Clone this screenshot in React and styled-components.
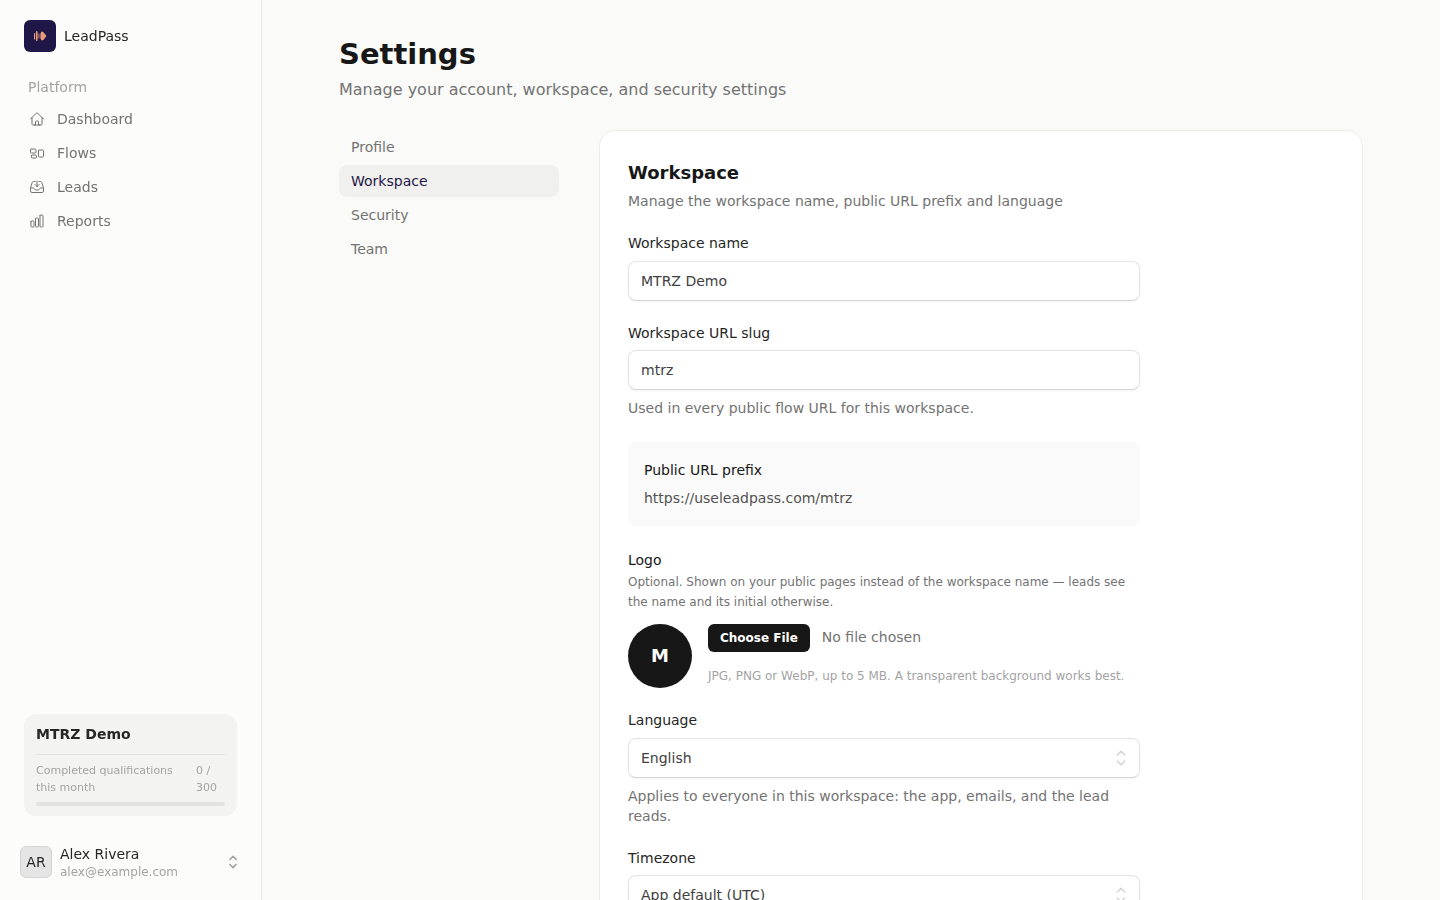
import React from "react";
import styled, { createGlobalStyle } from "styled-components";
import {
  HiOutlineHome,
  HiOutlineRectangleGroup,
  HiOutlineInboxArrowDown,
  HiOutlineChartBar,
} from "react-icons/hi2";

const GlobalStyle = createGlobalStyle`
  *, *::before, *::after { box-sizing: border-box; }
  body {
    margin: 0;
    background: #fafaf8;
    color: #171717;
    font-family: "DejaVu Sans", sans-serif;
    font-size: 14px;
    line-height: 20px;
  }
  h1, h2, p { margin: 0; }
  button, input, select { font: inherit; }
  svg { display: block; flex: none; }
`;

const Shell = styled.div`
  display: grid;
  grid-template-columns: 262px minmax(0, 1fr);
  align-items: start;
`;

const Sidebar = styled.aside`
  position: sticky;
  top: 0;
  display: flex;
  flex-direction: column;
  height: 100vh;
  padding: 20px 16px 16px;
  background: rgba(255, 255, 255, 0.4);
  border-right: 1px solid #e8e8e7;
  will-change: transform;
`;

const Brand = styled.a`
  display: flex;
  align-items: center;
  gap: 8px;
  padding-left: 8px;
  color: #262626;
  text-decoration: none;
`;

const NavHeading = styled.div`
  padding: 25px 12px 6px;
  color: #a3a3a3;
`;

const NavList = styled.nav`
  display: flex;
  flex-direction: column;
  gap: 2px;
`;

const NavItem = styled.a`
  display: flex;
  align-items: center;
  gap: 12px;
  height: 32px;
  padding: 0 13px;
  color: #737373;
  text-decoration: none;
`;

const UsageCard = styled.section`
  margin: auto 8px 24px;
  padding: 10px 12px;
  border-radius: 12px;
  background: rgba(23, 23, 23, 0.04);
`;

const UsageTitle = styled.div`
  padding-bottom: 10px;
  border-bottom: 1px solid #e2e2e1;
  color: #262626;
  font-weight: 700;
`;

const UsageRow = styled.div`
  display: flex;
  justify-content: space-between;
  padding: 7px 0 6px;
  color: #a3a3a3;
  font-size: 11px;
  line-height: 17px;
`;

const UsageLabel = styled.span`
  flex: 1;
`;

const UsageCount = styled.span`
  flex: 0 0 29px;
`;

const UsageTrack = styled.div`
  height: 4px;
  border-radius: 2px;
  background: #e2e2e1;
`;

const Account = styled.button`
  display: flex;
  align-items: center;
  gap: 8px;
  width: 100%;
  height: 44px;
  padding: 0 2px 0 4px;
  border: 0;
  background: transparent;
  color: #a3a3a3;
  text-align: left;
`;

const Initials = styled.span`
  display: grid;
  place-items: center;
  flex: none;
  width: 32px;
  height: 32px;
  border: 1px solid #d4d4d4;
  border-radius: 6px;
  background: #e5e5e5;
  color: #262626;
`;

const AccountText = styled.span`
  display: flex;
  flex: 1;
  flex-direction: column;
  min-width: 0;
  padding-top: 2px;
`;

const AccountName = styled.span`
  color: #262626;
  line-height: 18px;
`;

const AccountEmail = styled.span`
  font-size: 12px;
  line-height: 18px;
`;

const Main = styled.main`
  width: 100%;
  max-width: 1024px;
  margin: 0 auto;
  padding: 36px 0 32px;
`;

const PageTitle = styled.h1`
  font-size: 29px;
  line-height: 36px;
  font-weight: 700;
`;

const PageIntro = styled.p`
  margin-top: 6px;
  color: #737373;
  font-size: 16px;
  line-height: 24px;
`;

const Columns = styled.div`
  display: grid;
  grid-template-columns: 220px minmax(0, 1fr);
  gap: 40px;
  align-items: start;
  margin-top: 28px;
`;

const Tabs = styled.nav`
  display: flex;
  flex-direction: column;
  gap: 2px;
  padding-top: 1px;
`;

const Tab = styled.a`
  height: 32px;
  padding: 6px 12px;
  border-radius: 8px;
  background: ${(p) => (p.$active ? "#f0f0ef" : "transparent")};
  color: ${(p) => (p.$active ? "#1f1747" : "#737373")};
  text-decoration: none;
`;

const Card = styled.section`
  padding: 28px;
  border: 1px solid #ececeb;
  border-radius: 16px;
  background: #ffffff;
`;

const CardTitle = styled.h2`
  font-size: 18px;
  line-height: 28px;
  font-weight: 700;
`;

const CardIntro = styled.p`
  margin-top: 4px;
  color: #737373;
`;

const Form = styled.form`
  display: flex;
  flex-direction: column;
  gap: 24px;
  max-width: 512px;
  margin-top: 24px;
`;

const FieldBox = styled.div`
  display: flex;
  flex-direction: column;
  gap: 8px;
`;

const Label = styled.label`
  color: #262626;
  line-height: 1.25;
`;

const Hint = styled.p`
  color: #737373;
`;

const controlStyle = `
  width: 100%;
  height: 40px;
  padding: 0 12px;
  border: 1px solid #e4e4e4;
  border-bottom-color: #d6d6d6;
  border-radius: 8px;
  background: #ffffff;
  box-shadow: 0 1px 2px rgba(0, 0, 0, 0.05);
  color: #404040;
`;

const TextInput = styled.input`
  ${controlStyle}
`;

const Select = styled.select`
  ${controlStyle}
  appearance: none;
`;

const SelectBox = styled.div`
  position: relative;
  color: #d4d4d4;

  svg {
    position: absolute;
    top: 8px;
    right: 7px;
    pointer-events: none;
  }
`;

const Prefix = styled.div`
  display: flex;
  flex-direction: column;
  gap: 8px;
  padding: 18px 16px;
  border-radius: 8px;
  background: #fafafa;
`;

const PrefixUrl = styled.span`
  color: #525252;
`;

const LogoField = styled.div`
  display: flex;
  flex-direction: column;
`;

const LogoLabel = styled.label`
  color: #171717;
`;

const LogoNote = styled.p`
  margin: 2px 0 12px;
  color: #737373;
  font-size: 12px;
`;

const LogoRow = styled.div`
  display: flex;
  gap: 16px;
`;

const LogoInitial = styled.div`
  display: grid;
  place-items: center;
  flex: none;
  width: 64px;
  height: 64px;
  border-radius: 50%;
  background: #171717;
  color: #ffffff;
  font-size: 18px;
  font-weight: 700;
`;

const Upload = styled.div`
  display: flex;
  flex: 1;
  flex-direction: column;
  gap: 16px;
  min-width: 0;
`;

const FileInput = styled.input`
  width: 100%;
  height: 28px;
  color: #737373;

  &::file-selector-button {
    height: 28px;
    margin: 0 12px 0 0;
    padding: 0 12px;
    border: 0;
    border-radius: 6px;
    background: #171717;
    color: #ffffff;
    font-family: inherit;
    font-size: 12px;
    font-weight: 700;
  }
`;

const FileHint = styled.p`
  color: #a3a3a3;
  font-size: 12px;
  line-height: 16px;
`;

function BrandMark() {
  return (
    <svg width="32" height="32" viewBox="0 0 32 32" aria-hidden="true">
      <rect width="32" height="32" rx="6" fill="#1f1747" />
      <g fill="#ea9a7c">
        <rect x="10" y="13" width="1.2" height="6.5" rx="0.6" />
        <rect x="12" y="11" width="1.6" height="10" rx="0.8" />
        <rect x="14.3" y="13.5" width="1" height="5" rx="0.5" opacity="0.75" />
        <rect x="15.8" y="13" width="1" height="6" rx="0.4" opacity="0.75" />
        <path d="M17 11.8c1.6-.4 2.8.2 3.3 1.5l1.5 1.6c.5.6.5 1.6 0 2.2l-1.5 1.6c-.5 1.3-1.7 1.9-3.3 1.5z" />
      </g>
    </svg>
  );
}

function UpDown({ size, stroke }) {
  return (
    <svg
      width={size}
      height={size}
      viewBox="0 0 24 24"
      fill="none"
      stroke="currentColor"
      strokeWidth={stroke}
      strokeLinecap="round"
      strokeLinejoin="round"
      aria-hidden="true"
    >
      <path d="M8.25 15 12 18.75 15.75 15m-7.5-6L12 5.25 15.75 9" />
    </svg>
  );
}

function Field({ id, label, hint, children }) {
  return (
    <FieldBox>
      <Label htmlFor={id}>{label}</Label>
      {children}
      {hint && <Hint>{hint}</Hint>}
    </FieldBox>
  );
}

const navigation = [
  ["Dashboard", HiOutlineHome],
  ["Flows", HiOutlineRectangleGroup],
  ["Leads", HiOutlineInboxArrowDown],
  ["Reports", HiOutlineChartBar],
];

const tabs = ["Profile", "Workspace", "Security", "Team"];

export default function App() {
  return (
    <>
      <GlobalStyle />
      <Shell>
        <Sidebar>
          <Brand href="#">
            <BrandMark />
            LeadPass
          </Brand>
          <NavHeading>Platform</NavHeading>
          <NavList>
            {navigation.map(([name, Icon]) => (
              <NavItem key={name} href="#">
                <Icon size={16} />
                {name}
              </NavItem>
            ))}
          </NavList>
          <UsageCard>
            <UsageTitle>MTRZ Demo</UsageTitle>
            <UsageRow>
              <UsageLabel>Completed qualifications this month</UsageLabel>
              <UsageCount>0 / 300</UsageCount>
            </UsageRow>
            <UsageTrack />
          </UsageCard>
          <Account type="button">
            <Initials>AR</Initials>
            <AccountText>
              <AccountName>Alex Rivera</AccountName>
              <AccountEmail>alex@example.com</AccountEmail>
            </AccountText>
            <UpDown size={20} stroke={2} />
          </Account>
        </Sidebar>
        <Main>
          <PageTitle>Settings</PageTitle>
          <PageIntro>Manage your account, workspace, and security settings</PageIntro>
          <Columns>
            <Tabs>
              {tabs.map((name) => (
                <Tab key={name} href="#" $active={name === "Workspace"}>
                  {name}
                </Tab>
              ))}
            </Tabs>
            <Card>
              <CardTitle>Workspace</CardTitle>
              <CardIntro>Manage the workspace name, public URL prefix and language</CardIntro>
              <Form>
                <Field id="name" label="Workspace name">
                  <TextInput id="name" type="text" defaultValue="MTRZ Demo" />
                </Field>
                <Field
                  id="slug"
                  label="Workspace URL slug"
                  hint="Used in every public flow URL for this workspace."
                >
                  <TextInput id="slug" type="text" defaultValue="mtrz" />
                </Field>
                <Prefix>
                  <span>Public URL prefix</span>
                  <PrefixUrl>https://useleadpass.com/mtrz</PrefixUrl>
                </Prefix>
                <LogoField>
                  <LogoLabel htmlFor="logo">Logo</LogoLabel>
                  <LogoNote>
                    Optional. Shown on your public pages instead of the workspace name — leads see
                    the name and its initial otherwise.
                  </LogoNote>
                  <LogoRow>
                    <LogoInitial>M</LogoInitial>
                    <Upload>
                      <FileInput id="logo" type="file" accept="image/jpeg,image/png,image/webp" />
                      <FileHint>
                        JPG, PNG or WebP, up to 5 MB. A transparent background works best.
                      </FileHint>
                    </Upload>
                  </LogoRow>
                </LogoField>
                <Field
                  id="language"
                  label="Language"
                  hint="Applies to everyone in this workspace: the app, emails, and the lead reads."
                >
                  <SelectBox>
                    <Select id="language">
                      <option>English</option>
                    </Select>
                    <UpDown size={24} stroke={1.5} />
                  </SelectBox>
                </Field>
                <Field id="timezone" label="Timezone">
                  <SelectBox>
                    <Select id="timezone">
                      <option>App default (UTC)</option>
                    </Select>
                    <UpDown size={24} stroke={1.5} />
                  </SelectBox>
                </Field>
              </Form>
            </Card>
          </Columns>
        </Main>
      </Shell>
    </>
  );
}
